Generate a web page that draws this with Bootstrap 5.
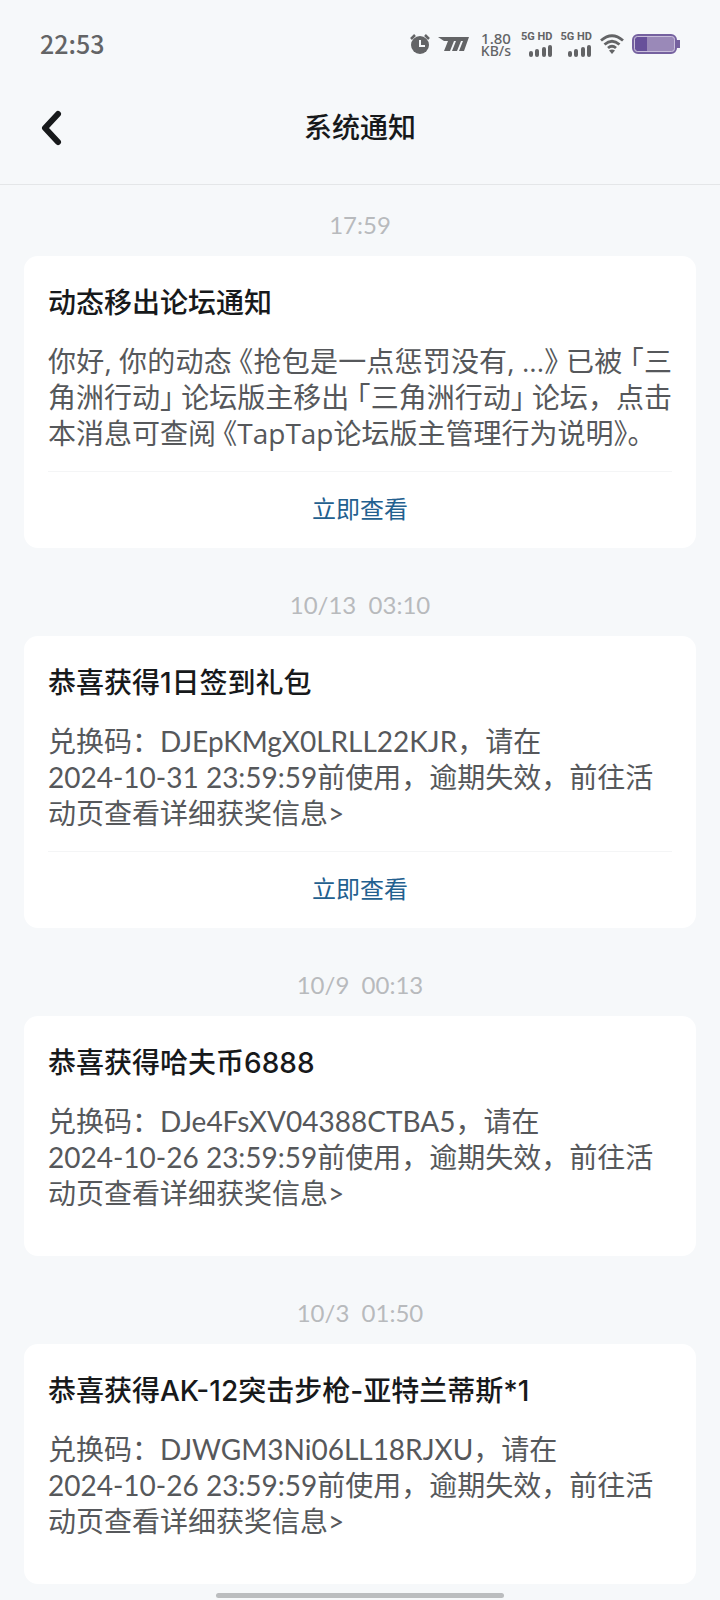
<!DOCTYPE html>
<html lang="zh-CN">
<head>
<meta charset="utf-8">
<meta name="viewport" content="width=device-width, initial-scale=1">
<title>系统通知</title>
<link href="https://cdn.jsdelivr.net/npm/bootstrap@5.3.0/dist/css/bootstrap.min.css" rel="stylesheet">
<style>
  body { background: #f6f8fa; color: #17191b; font-family: Lato, "Noto Sans CJK SC", sans-serif; font-size: 28px; line-height: 36px; }
  .status-bar { padding: 24px 40px 0; color: #636466; font-family: "Noto Sans CJK SC", sans-serif; font-size: 25px; line-height: 38px; font-weight: 500; }
  .status-icons { gap: 8px; padding-top: 2px; }
  .net-speed { font-family: "Noto Sans", sans-serif; font-size: 14px; line-height: 12px; padding: 0 2px 0 4px; }
  .net-speed .rate { font-size: 15px; }
  .signal { font-family: Roboto, sans-serif; font-size: 11px; line-height: 9px; font-weight: 700; }
  .title-bar { padding: 42px 40px 32px; border-bottom: 1px solid #e4e6e8; display: grid; grid-template-columns: 1fr auto 1fr; }
  .title-bar h1, .note-title { font-family: Inter, "Noto Sans CJK SC", sans-serif; font-size: 28px; line-height: 36px; font-weight: 500; }
  .back-btn { justify-self: start; line-height: 0; }
  .feed { padding: 23px 24px 9px; gap: 40px; }
  .note-time { color: #b8babd; font-size: 24px; line-height: 34px; margin-bottom: 14px; white-space: pre; }
  .note-card { border: 0; border-radius: 14px; padding: 29px 24px 0; }
  .note-title { margin-bottom: 22px; }
  .note-text { color: #56585b; margin-bottom: 20px; }
  .note-text.justified { font-family: "Open Sans", "Noto Sans CJK SC", sans-serif; text-align: justify; font-feature-settings: "halt"; }
  .note-card.plain { padding-bottom: 25px; }
  .full { font-feature-settings: normal; }
  .note-link { border-top: 1px solid #f4f5f6; color: #23608f; font-size: 24px; line-height: 74px; padding-bottom: 2px; }
  .home-bar { width: 40%; height: 5px; background: #bbbdbf; border-radius: 3px; margin-bottom: 2px; }
</style>
</head>
<body>
<div class="status-bar d-flex justify-content-between align-items-center">
  <span>22:53</span>
  <div class="status-icons d-flex align-items-center">
    <svg width="20" height="22" viewBox="0 0 20 22" fill="none" stroke="#636466"><circle cx="10" cy="12" r="9" fill="#636466" stroke="none"/><path d="M1 6l4-4M19 6l-4-4" stroke-width="2.5"/><path d="M10 7v6h5" stroke="#f6f8fa" stroke-width="2"/></svg>
    <svg width="31" height="16" viewBox="0 0 31 16" fill="#636466"><path d="M0 1h31l-5 14h-5l4-10h-2l-4 10h-5l4-10h-2l-4 10H6L10 5H6z"/></svg>
    <div class="net-speed text-center"><span class="rate">1.80</span><br>KB/s</div>
    <div class="signal d-flex flex-column align-items-end gap-1">5G HD<svg width="24" height="12" viewBox="0 0 24 12" fill="#636466"><rect y="6" width="4" height="6" rx="2"/><rect x="6" y="4" width="4" height="8" rx="2"/><rect x="13" y="2" width="4" height="10" rx="2"/><rect x="19" width="4" height="12" rx="2"/></svg></div>
    <div class="signal d-flex flex-column align-items-end gap-1">5G HD<svg width="24" height="12" viewBox="0 0 24 12" fill="#636466"><rect y="6" width="4" height="6" rx="2"/><rect x="6" y="4" width="4" height="8" rx="2"/><rect x="13" y="2" width="4" height="10" rx="2"/><rect x="19" width="4" height="12" rx="2"/></svg></div>
    <svg width="24" height="20" viewBox="0 0 24 20" fill="none" stroke="#636466" stroke-width="2.800"><path d="M1 6.500Q12-3 23 6.500M4.500 10.500Q12 4 19.500 10.500M8 14Q12 10.500 16 14"/><path d="M9 16.500q3-2 6 0L12 20z" fill="#636466" stroke="none"/></svg>
    <svg width="48" height="20" viewBox="0 0 48 20"><rect x="1" y="1" width="43" height="18" rx="5" fill="#9a89b8" stroke="#75619f" stroke-width="2"/><path d="M3 3h12v14H5q-2 0-2-2z" fill="#67509a"/><rect x="2.500" y="2.500" width="40" height="15" rx="3" fill="none" stroke="#c9bfdb"/><path d="M45 6h3v8h-3z" fill="#75619f"/></svg>
  </div>
</div>
<header class="title-bar align-items-center">
  <button class="back-btn btn p-0 border-0" type="button" aria-label="返回"><svg width="24" height="48" viewBox="0 0 24 48" fill="none" stroke="#17191b" stroke-width="6" stroke-linecap="round" stroke-linejoin="round"><path d="M18 10L5 24L18 38"/></svg></button>
  <h1 class="m-0">系统通知</h1>
</header>
<main class="feed d-flex flex-column">
  <article>
    <div class="note-time text-center">17:59</div>
    <section class="note-card card">
      <h2 class="note-title">动态移出论坛通知</h2>
      <p class="note-text justified">你好, 你的动态 《抢包是一点惩罚没有, ...》 已被 「三角洲行动」 论坛版主移出 「三角洲行动」 论坛<span class="full">，</span>点击本消息可查阅 《TapTap论坛版主管理行为说明》<span class="full">。</span></p>
      <a class="note-link text-center text-decoration-none" href="#">立即查看</a>
    </section>
  </article>
  <article>
    <div class="note-time text-center">10/13  03:10</div>
    <section class="note-card card">
      <h2 class="note-title">恭喜获得1日签到礼包</h2>
      <p class="note-text">兑换码：DJEpKMgX0LRLL22KJR，请在<br>2024-10-31 23:59:59前使用，逾期失效，前往活动页查看详细获奖信息&gt;</p>
      <a class="note-link text-center text-decoration-none" href="#">立即查看</a>
    </section>
  </article>
  <article>
    <div class="note-time text-center">10/9  00:13</div>
    <section class="note-card card plain">
      <h2 class="note-title">恭喜获得哈夫币6888</h2>
      <p class="note-text">兑换码：DJe4FsXV04388CTBA5，请在<br>2024-10-26 23:59:59前使用，逾期失效，前往活动页查看详细获奖信息&gt;</p>
    </section>
  </article>
  <article>
    <div class="note-time text-center">10/3  01:50</div>
    <section class="note-card card plain">
      <h2 class="note-title">恭喜获得AK-12突击步枪-亚特兰蒂斯*1</h2>
      <p class="note-text">兑换码：DJWGM3Ni06LL18RJXU，请在<br>2024-10-26 23:59:59前使用，逾期失效，前往活动页查看详细获奖信息&gt;</p>
    </section>
  </article>
</main>
<div class="home-bar mx-auto"></div>
<script src="https://cdn.jsdelivr.net/npm/bootstrap@5.3.0/dist/js/bootstrap.bundle.min.js"></script>
</body>
</html>
